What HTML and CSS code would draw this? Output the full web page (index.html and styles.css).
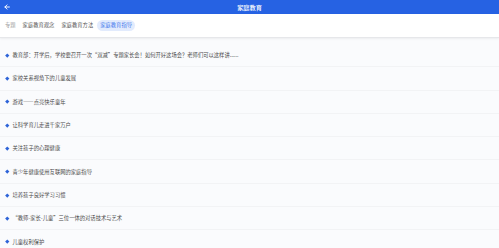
FILE: index.html
```html
<!DOCTYPE html>
<html lang="zh">
<head>
    <meta charset="UTF-8">
    <title>家庭教育</title>
    <link rel="stylesheet" href="styles.css">
</head>
<body>
    <div class="header">
        <div class="back">
            <svg width="6" height="6" viewBox="0 0 10 10"><path d="M9 5H1.5M5 1.5L1.5 5L5 8.5" fill="none" stroke="#fff" stroke-width="1.6" stroke-linecap="round" stroke-linejoin="round"/></svg>
        </div>
        <div class="title">家庭教育</div>
        <div></div>
    </div>
    <div class="tabs">
        <span class="tab muted">专题</span>
        <span class="tab">家庭教育观念</span>
        <span class="tab">家庭教育方法</span>
        <span class="tab active">家庭教育指导</span>
    </div>
    <ul class="list">
        <li class="row">教育部：开学后，学校要召开一次“双减”专题家长会！如何开好这场会？老师们可以这样讲......</li>
        <li class="row">家校关系视角下的儿童发展</li>
        <li class="row">游戏——点亮快乐童年</li>
        <li class="row">让科学育儿走进千家万户</li>
        <li class="row">关注孩子的心理健康</li>
        <li class="row">青少年健康使用互联网的家庭指导</li>
        <li class="row">培养孩子良好学习习惯</li>
        <li class="row">“教师-家长-儿童”三位一体的对话技术与艺术</li>
        <li class="row">儿童权利保护</li>
    </ul>
</body>
</html>
```

FILE: styles.css
```css
body {
    margin: 0;
    width: 499px;
    height: 248px;
    overflow: hidden;
    background: #fafbfd;
    font-family: "Noto Sans CJK SC", "Noto Sans", sans-serif;
    color: #4a4a4a;
}
.header {
    height: 14px;
    background: #2662e3;
    display: grid;
    grid-template-columns: 1fr auto 1fr;
    align-items: center;
}
.back {
    padding-left: 4px;
    display: flex;
    align-items: center;
}
.title {
    color: #fff;
    font-size: 6.2px;
    font-weight: 500;
}
.tabs {
    height: 23px;
    background: #fff;
    display: flex;
    align-items: center;
    gap: 1px;
    padding-left: 2px;
    border-bottom: 1px solid #e6e7ea;
    box-shadow: 0 1px 2px rgba(0,0,0,0.06);
    font-size: 5.3px;
}
.tab {
    padding: 0 3px;
    height: 11px;
    line-height: 11px;
    color: #505050;
}
.tab.muted {
    color: #a0a0a0;
}
.tab.active {
    background: #e2ebfd;
    color: #3f78ec;
    border-radius: 6px;
    padding: 0 3px;
}
.list {
    list-style: none;
    margin: 6px 0 0 0;
    padding: 0;
}
.row {
    height: 23.3px;
    box-sizing: border-box;
    border-bottom: 1px solid #f2f3f5;
    display: flex;
    align-items: center;
    gap: 4px;
    padding-left: 6px;
    font-size: 5.3px;
}
.row::before {
    content: "";
    width: 2.5px;
    height: 2.5px;
    background: #2d63d8;
    transform: rotate(45deg);
}
```
